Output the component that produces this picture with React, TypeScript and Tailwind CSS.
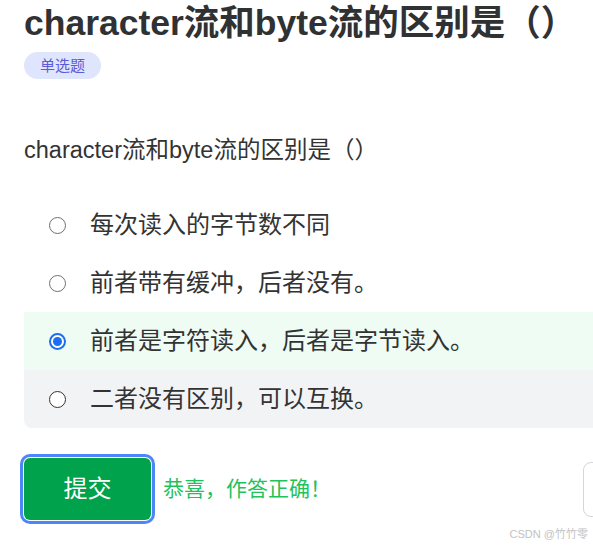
import React from "react";

const options = [
  { text: "每次读入的字节数不同", state: "normal" },
  { text: "前者带有缓冲，后者没有。", state: "normal" },
  { text: "前者是字符读入，后者是字节读入。", state: "selected" },
  { text: "二者没有区别，可以互换。", state: "hover" },
];

function Radio({ state }: { state: string }) {
  if (state === "selected") {
    return (
      <span className="flex h-[17px] w-[17px] shrink-0 items-center justify-center rounded-full border-2 border-[#1b6ff2] bg-white">
        <span className="h-[9px] w-[9px] rounded-full bg-[#1b6ff2]" />
      </span>
    );
  }
  return (
    <span
      className={
        state === "hover"
          ? "h-[17px] w-[17px] shrink-0 rounded-full border-[1.5px] border-[#333333] bg-white"
          : "h-[17px] w-[17px] shrink-0 rounded-full border-[1.5px] border-[#6f6f6f] bg-white"
      }
    />
  );
}

export default function App() {
  return (
    <div
      className="relative h-[546px] w-[593px] overflow-hidden bg-white text-[#333333]"
      style={{ fontFamily: '"Liberation Sans", "Noto Sans CJK SC", sans-serif' }}
    >
      <div className="w-[680px] pl-6">
        <h1 className="mt-[2px] text-[35.5px] font-bold leading-[42px] text-[#303133]">
          character流和byte流的区别是（）
        </h1>
        <div className="mt-[8px] flex">
          <span className="rounded-full bg-[#e0e5fe] px-4 text-[15px] leading-[27px] text-[#5b5bd6]">
            单选题
          </span>
        </div>
        <p className="mt-[56px] text-[23.5px] leading-[30px] text-[#333333]">
          character流和byte流的区别是（）
        </p>
        <div className="mt-[31px] overflow-hidden rounded-lg">
          {options.map((o, i) => (
            <div
              key={i}
              className={
                o.state === "selected"
                  ? "flex h-[58px] items-center gap-[24px] bg-[#effcf4] pl-[25px]"
                  : o.state === "hover"
                  ? "flex h-[58px] items-center gap-[24px] bg-[#f2f3f5] pl-[25px]"
                  : "flex h-[58px] items-center gap-[24px] bg-white pl-[25px]"
              }
            >
              <Radio state={o.state} />
              <span className="text-[24px] leading-[30px] text-[#333333]">{o.text}</span>
            </div>
          ))}
        </div>
        <div className="mt-[30px] flex items-center">
          <button className="h-[62px] w-[127px] rounded-[6px] bg-[#00a24b] text-[24px] text-white ring-[3px] ring-[#4f86f7] ring-offset-1">
            提交
          </button>
          <span className="ml-3 text-[21px] text-[#1fc25b]">恭喜，作答正确！</span>
          <div className="ml-auto h-[55px] w-[97px] rounded-[8px] border border-[#d4d6db] bg-white" />
        </div>
      </div>
      <div className="absolute bottom-[4px] right-[5px] text-[11px] text-[#c2c2c2]">CSDN @竹竹零</div>
    </div>
  );
}
